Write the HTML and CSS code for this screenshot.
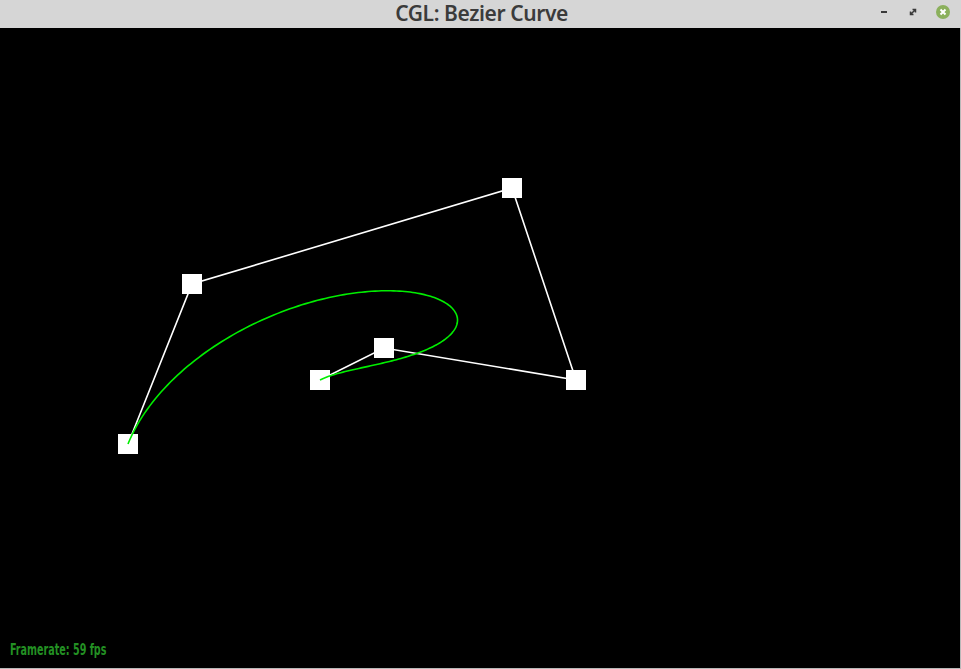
FILE: index.html
```html
<!DOCTYPE html>
<html>
<head>
<meta charset="utf-8">
<title>CGL: Bezier Curve</title>
<link rel="stylesheet" href="styles.css">
</head>
<body>
<div class="window">
  <header class="titlebar">
    <div class="title">CGL: Bezier Curve</div>
    <div class="controls">
      <svg class="ctl" width="14" height="14" viewBox="0 0 14 14"><rect x="4" y="6" width="6" height="2" fill="#3a3a3a"/></svg>
      <svg class="ctl" width="14" height="14" viewBox="0 0 14 14"><path d="M4.5 9.5 L9.5 4.5 M6.5 4.5 H9.5 V7.5 M4.5 6.5 V9.5 H7.5" stroke="#3a3a3a" stroke-width="1.5" fill="none"/></svg>
      <svg class="ctl" width="16" height="16" viewBox="0 0 16 16"><circle cx="8" cy="8" r="7" fill="#8bb05c"/><path d="M5.5 5.5 L10.5 10.5 M10.5 5.5 L5.5 10.5" stroke="#fff" stroke-width="2"/></svg>
    </div>
  </header>
  <main class="canvas">
    <svg class="scene" width="960" height="640" viewBox="0 28 960 640">
      <polyline class="poly" points="128,444 192,284 512,188 576,380 384,348 320,380"/>
      <rect class="pt" x="118" y="434" width="20" height="20"/>
      <rect class="pt" x="182" y="274" width="20" height="20"/>
      <rect class="pt" x="502" y="178" width="20" height="20"/>
      <rect class="pt" x="566" y="370" width="20" height="20"/>
      <rect class="pt" x="374" y="338" width="20" height="20"/>
      <rect class="pt" x="310" y="370" width="20" height="20"/>
      <polyline id="curve" class="curve" points=""/>
    </svg>
    <div class="fps">Framerate: 59 fps</div>
  </main>
</div>
<script src="script.js"></script>
</body>
</html>
```
FILE: styles.css
```css
html, body {
  margin: 0;
  padding: 0;
  background: #000;
  width: 961px;
  height: 669px;
  overflow: hidden;
}
.window {
  width: 961px;
  height: 669px;
  display: flex;
  flex-direction: column;
  background: #d4d4d4;
}
.titlebar {
  height: 28px;
  flex: none;
  background: #d6d6d6;
  position: relative;
  display: flex;
  align-items: center;
  justify-content: center;
}
.title {
  font-family: "Noto Sans", sans-serif;
  font-size: 21px;
  font-weight: 600;
  color: #3b3b3b;
  line-height: 28px;
  letter-spacing: -0.4px;
  margin-left: 2px;
  margin-bottom: 2px;
  white-space: nowrap;
}
.controls {
  position: absolute;
  right: 10px;
  top: 4px;
  display: flex;
  align-items: center;
  gap: 15px;
}
.ctl { display: block; }
.canvas {
  position: relative;
  width: 960px;
  height: 640px;
  background: #000;
  border-right: 1px solid #b8b8b8;
  border-bottom: 1px solid #b8b8b8;
}
.scene { display: block; }
.poly {
  fill: none;
  stroke: #fff;
  stroke-width: 1.6;
}
.pt { fill: #fff; }
.curve {
  fill: none;
  stroke: #00ee00;
  stroke-width: 1.6;
}
.fps {
  position: absolute;
  left: 10px;
  top: 613px;
  font-family: "DejaVu Sans Condensed", "DejaVu Sans", sans-serif;
  font-weight: bold;
  font-size: 15px;
  color: #239023;
  transform: scaleX(0.71);
  transform-origin: left top;
  white-space: nowrap;
}
```
FILE: script.js
```js
(function () {
  var P = [[128,444],[192,284],[512,188],[576,380],[384,348],[320,380]];
  var C = [1,5,10,10,5,1];
  var pts = [];
  var N = 200;
  for (var i = 0; i <= N; i++) {
    var t = i / N, x = 0, y = 0;
    for (var k = 0; k < 6; k++) {
      var b = C[k] * Math.pow(t, k) * Math.pow(1 - t, 5 - k);
      x += b * P[k][0];
      y += b * P[k][1];
    }
    pts.push(x.toFixed(2) + "," + y.toFixed(2));
  }
  document.getElementById("curve").setAttribute("points", pts.join(" "));
})();
```
